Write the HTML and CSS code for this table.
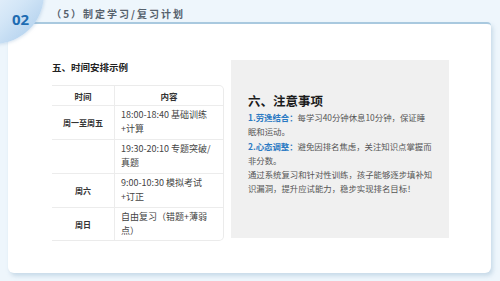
FILE: index.html
```html
<!DOCTYPE html>
<html lang="zh-CN">
<head>
<meta charset="utf-8">
<link rel="stylesheet" href="styles.css">
</head>
<body>
<div class="slide">
  <div class="badge"></div>
  <header class="topbar">
    <span class="num">02</span>
    <h1 class="title">（5）制定学习/复习计划</h1>
  </header>
  <main class="card">
    <section class="left">
      <h2 class="sec-title">五、时间安排示例</h2>
      <table class="plan">
        <thead>
          <tr><th class="c1">时间</th><th class="c2">内容</th></tr>
        </thead>
        <tbody>
          <tr><td class="day">周一至周五</td><td class="txt">18:00-18:40 基础训练<br>+计算</td></tr>
          <tr><td class="day"></td><td class="txt">19:30-20:10 专题突破/<br>真题</td></tr>
          <tr><td class="day">周六</td><td class="txt">9:00-10:30 模拟考试<br>+订正</td></tr>
          <tr class="last"><td class="day">周日</td><td class="txt">自由复习（错题+薄弱<br>点）</td></tr>
        </tbody>
      </table>
    </section>
    <aside class="notes">
      <h3 class="notes-title">六、注意事项</h3>
      <p class="note"><b class="lbl">1.劳逸结合：</b>每学习40分钟休息10分钟，保证睡<br>眠和运动。</p>
      <p class="note"><b class="lbl">2.心态调整：</b>避免因排名焦虑，关注知识点掌握而<br>非分数。</p>
      <p class="note">通过系统复习和针对性训练，孩子能够逐步填补知<br>识漏洞，提升应试能力，稳步实现排名目标！</p>
    </aside>
  </main>
</div>
</body>
</html>
```

FILE: styles.css
```css
html, body {
  margin: 0;
  padding: 0;
}
body {
  width: 500px;
  height: 281px;
  overflow: hidden;
  background: #eef6fc;
  font-family: "Noto Sans CJK SC", "Noto Sans", sans-serif;
}
.slide {
  position: relative;
  width: 500px;
  height: 281px;
  overflow: hidden;
}
.badge {
  position: absolute;
  left: -56px;
  top: -56px;
  width: 100px;
  height: 100px;
  border-radius: 50%;
  background: linear-gradient(135deg, #f3f8fd 35%, #d3e6f7 68%, #a6c9ea 100%);
  box-shadow: 1px 1px 3px rgba(120, 160, 200, 0.25);
  z-index: 2;
}
.topbar {
  height: 22px;
  display: flex;
  align-items: flex-start;
  padding-left: 12px;
  box-sizing: border-box;
}
.num {
  position: relative;
  z-index: 3;
  margin-top: 10px;
  font-size: 15px;
  line-height: 18px;
  font-weight: 700;
  color: #1e6cb2;
  font-family: "Open Sans", "Noto Sans", sans-serif;
}
.title {
  margin: 7px 0 0 22px;
  font-size: 10px;
  line-height: 14px;
  font-weight: 700;
  letter-spacing: 2px;
  color: #56616c;
}
.card {
  margin-left: 8px;
  width: 483px;
  height: 251px;
  box-sizing: border-box;
  background: #ffffff;
  border-top: 2px solid #a9c9df;
  border-radius: 0 4px 6px 6px;
  box-shadow: 2px 3px 4px rgba(130, 165, 195, 0.35);
  display: flex;
  align-items: flex-start;
  gap: 7px;
  padding: 36px 0 0 44px;
}
.left {
  width: 172px;
}
.sec-title {
  margin: 0;
  font-size: 9.5px;
  line-height: 14px;
  font-weight: 700;
  color: #222;
}
.plan {
  margin-top: 11px;
  width: 172px;
  border-collapse: separate;
  border-spacing: 0;
  border: 1px solid #ebebeb;
  border-left: none;
  border-radius: 0 5px 5px 0;
  table-layout: fixed;
}
.plan th, .plan td {
  padding: 0;
  border-bottom: 1px solid #ececec;
}
.plan .last td {
  border-bottom: none;
}
.plan .c1 {
  width: 62px;
}
.plan th {
  height: 19px;
  font-size: 8.5px;
  font-weight: 700;
  color: #333;
  text-align: center;
}
.plan th.c1, .plan td.day {
  border-right: 1px solid #ececec;
}
.plan td.day {
  font-size: 8px;
  font-weight: 700;
  color: #333;
  text-align: center;
}
.plan td.txt {
  font-size: 9px;
  line-height: 14px;
  color: #444;
  padding: 2px 4px 3px 6px;
  white-space: nowrap;
}
.plan .last td.txt {
  padding-bottom: 2px;
}
.notes {
  width: 218px;
  height: 178px;
  box-sizing: border-box;
  background: #f0f0f0;
  padding: 32px 0 0 17px;
}
.notes-title {
  margin: 0;
  font-size: 12.5px;
  line-height: 18px;
  font-weight: 700;
  color: #1b1b1b;
}
.note {
  margin: 0;
  font-size: 8.4px;
  line-height: 14.3px;
  color: #555;
  white-space: nowrap;
}
.lbl {
  color: #2a79c3;
  font-weight: 700;
}
```
